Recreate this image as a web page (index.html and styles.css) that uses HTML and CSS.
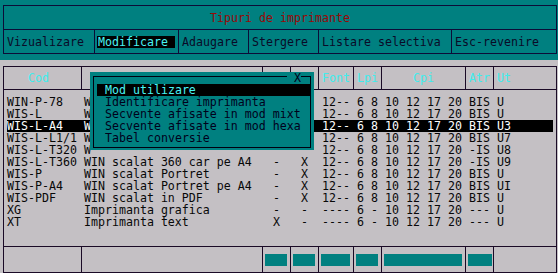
FILE: index.html
```html
<!DOCTYPE html>
<html>
<head>
<meta charset="utf-8">
<link rel="stylesheet" href="styles.css">
</head>
<body>
<div class="screen">
  <header class="top">
    <div class="titlebox">
      <div class="title">Tipuri de imprimante</div>
      <nav class="menu">
        <div class="mi">Vizualizare</div>
        <div class="mi"><span class="sel">Modificare </span></div>
        <div class="mi">Adaugare</div>
        <div class="mi">Stergere</div>
        <div class="mi">Listare selectiva</div>
        <div class="mi">Esc-revenire</div>
      </nav>
    </div>
  </header>

  <section class="table">
    <div class="cols thead">
      <div class="hc c-cod">Cod</div>
      <div class="hc"></div>
      <div class="hc"></div>
      <div class="hc"></div>
      <div class="hc c-sm">Font</div>
      <div class="hc c-sm">Lpi</div>
      <div class="hc c-cpi">Cpi</div>
      <div class="hc c-sm">Atr</div>
      <div class="hc c-sm">Ut</div>
    </div>

    <div class="tbody">
      <div class="row"><span>WIN-P-78</span><span>W</span><span></span><span></span><span>12--</span><span>6 8</span><span>10 12 17 20</span><span>BIS</span><span>U</span></div>
      <div class="row"><span>WIS-L</span><span>W</span><span></span><span></span><span>12--</span><span>6 8</span><span>10 12 17 20</span><span>BIS</span><span>U</span></div>
      <div class="row hl"><span>WIS-L-A4</span><span>W</span><span></span><span></span><span>12--</span><span>6 8</span><span>10 12 17 20</span><span>BIS</span><span>U3</span></div>
      <div class="row"><span>WIS-L-L1/1</span><span>W</span><span></span><span></span><span>12--</span><span>6 8</span><span>10 12 17 20</span><span>BIS</span><span>U7</span></div>
      <div class="row"><span>WIS-L-T320</span><span>W</span><span></span><span></span><span>12--</span><span>6 8</span><span>10 12 17 20</span><span>-IS</span><span>U8</span></div>
      <div class="row"><span>WIS-L-T360</span><span>WIN scalat 360 car pe A4</span><span>-</span><span>X</span><span>12--</span><span>6 8</span><span>10 12 17 20</span><span>-IS</span><span>U9</span></div>
      <div class="row"><span>WIS-P</span><span>WIN scalat Portret</span><span>-</span><span>X</span><span>12--</span><span>6 8</span><span>10 12 17 20</span><span>BIS</span><span>U</span></div>
      <div class="row"><span>WIS-P-A4</span><span>WIN scalat Portret pe A4</span><span>-</span><span>X</span><span>12--</span><span>6 8</span><span>10 12 17 20</span><span>BIS</span><span>UI</span></div>
      <div class="row"><span>WIS-PDF</span><span>WIN scalat in PDF</span><span>-</span><span>X</span><span>12--</span><span>6 8</span><span>10 12 17 20</span><span>BIS</span><span>U</span></div>
      <div class="row"><span>XG</span><span>Imprimanta grafica</span><span>-</span><span>-</span><span>----</span><span>6 -</span><span>10 12 17 20</span><span>---</span><span>U</span></div>
      <div class="row"><span>XT</span><span>Imprimanta text</span><span>X</span><span>-</span><span>----</span><span>6 -</span><span>10 12 17 20</span><span>---</span><span>U</span></div>
    </div>

    <div class="cols tfoot">
      <div class="fc"></div>
      <div class="fc"></div>
      <div class="fc"><i class="blk"></i></div>
      <div class="fc"><i class="blk"></i></div>
      <div class="fc"><i class="blk"></i></div>
      <div class="fc"><i class="blk"></i></div>
      <div class="fc"><i class="blk"></i></div>
      <div class="fc"><i class="blk blk-atr"></i></div>
      <div class="fc"></div>
    </div>
  </section>

  <div class="popup">
    <div class="frame">
      <span class="close"> X</span>
      <div class="item on">Mod utilizare</div>
      <div class="item">Identificare imprimanta</div>
      <div class="item">Secvente afisate in mod mixt</div>
      <div class="item">Secvente afisate in mod hexa</div>
      <div class="item">Tabel conversie</div>
    </div>
  </div>
</div>
</body>
</html>
```

FILE: styles.css
```css
* {
  box-sizing: border-box;
  margin: 0;
  padding: 0;
}

html, body {
  width: 558px;
  height: 273px;
  overflow: hidden;
}

body {
  background: #c4c0c4;
  font-family: "DejaVu Sans Mono", "Liberation Mono", monospace;
  font-size: 11.62px;
  line-height: 12px;
  color: #080808;
}

.screen {
  position: relative;
  width: 558px;
  height: 273px;
}

/* ---------- top (teal) area ---------- */
.top {
  background: #008080;
  height: 60px;
  padding: 5px 0 0 3px;
}

.titlebox {
  width: 554px;
  border: 1px solid #0c0c38;
}

.title {
  height: 24px;
  padding-top: 6px;
  text-align: center;
  color: #980808;
  border-bottom: 1px solid #0c0c38;
}

.menu {
  display: grid;
  grid-template-columns: 90px 84px 70px 70px 133px 105px;
  height: 23px;
}

.mi {
  padding: 6px 0 0 3px;
  color: #0a0a28;
  white-space: pre;
}

.mi + .mi {
  border-left: 1px solid #0c0c38;
}

.sel {
  display: inline-block;
  height: 12px;
  margin-left: -1px;
  padding-left: 1px;
  background: #000;
  color: #48f4f4;
  white-space: pre;
}

/* ---------- table ---------- */
.table {
  margin: 6px 0 0 3px;
  width: 554px;
  border: 1px solid #1a0a26;
}

.cols {
  display: grid;
  grid-template-columns: 77px 181px 28px 28px 35px 28px 84px 28px 63px;
}

.thead {
  height: 23px;
  border-bottom: 1px solid #1a0a26;
}

.hc {
  padding: 5px 0 0 3px;
  color: #40ecec;
  white-space: pre;
}

.hc + .hc,
.fc + .fc {
  border-left: 1px solid #1a0a26;
}

.hc.c-cod { padding-left: 24px; }
.hc.c-cpi { padding-left: 31px; }

.tbody {
  height: 156px;
  padding: 6px 0 0 3px;
}

.row {
  display: grid;
  grid-template-columns: 77px 189px 28px 21px 35px 28px 84px 28px 56px;
  width: 546px;
  height: 12px;
  white-space: pre;
}

.row.hl {
  background: #000;
  color: #fff;
}

.tfoot {
  height: 26px;
  border-top: 1px solid #1a0a26;
}

.fc {
  padding: 7px 3px 0 2px;
}

.blk {
  display: block;
  height: 12px;
  background: #008080;
}

.fc .blk-atr {
  margin-right: -2px;
}

/* ---------- popup menu ---------- */
.popup {
  position: absolute;
  left: 90px;
  top: 72px;
  width: 224px;
  height: 78px;
  background: #008080;
  padding: 4px 3px 2px 3px;
}

.frame {
  position: relative;
  height: 100%;
  border: 1px solid #000010;
  padding: 7px 0 0 3px;
}

.close {
  position: absolute;
  top: -5px;
  left: 193px;
  height: 12px;
  background: #008080;
  color: #000018;
  white-space: pre;
}

.item {
  height: 12px;
  padding-left: 8px;
  color: #00001c;
  white-space: pre;
}

.item.on {
  background: #000;
  color: #48f4f4;
}
```
